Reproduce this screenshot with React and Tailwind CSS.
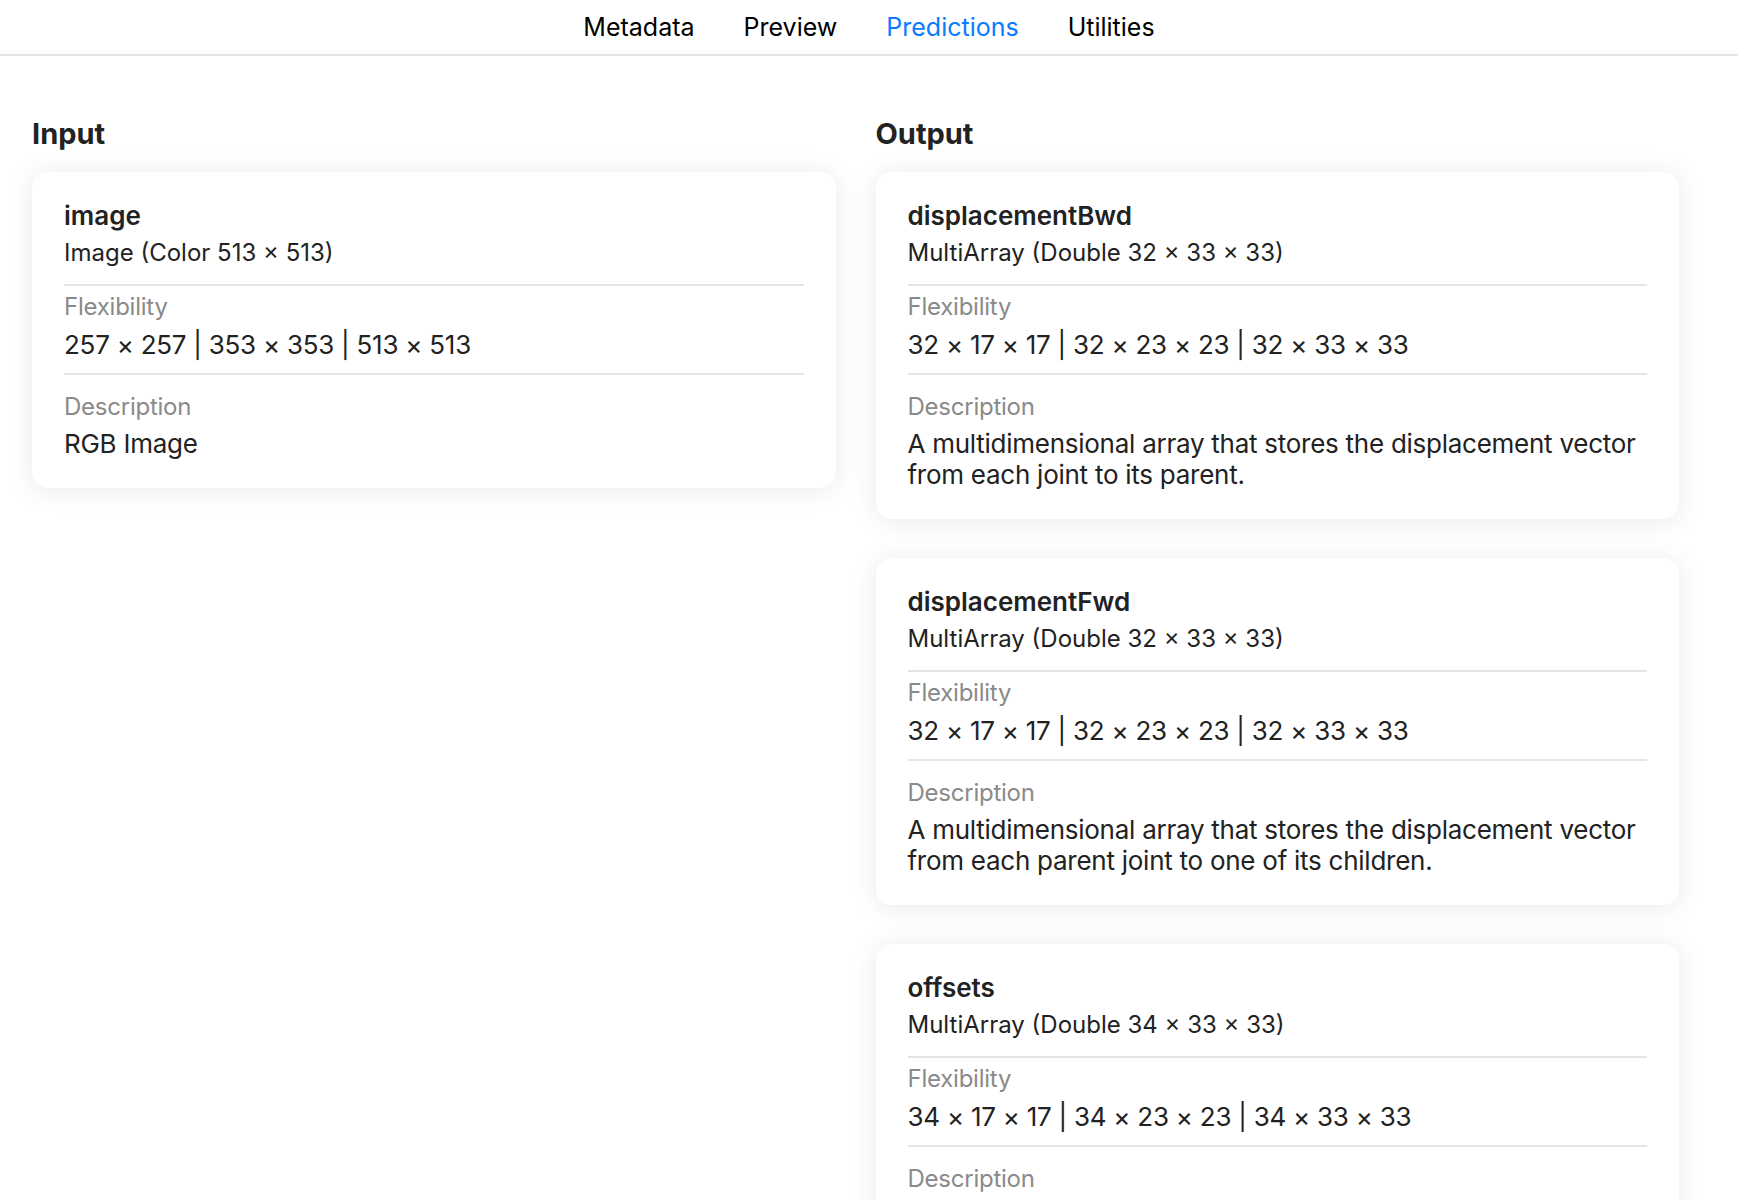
import React from "react";

const tabs = ["Metadata", "Preview", "Predictions", "Utilities"];

const inputs = [
  {
    name: "image",
    type: "Image (Color 513 × 513)",
    flex: "257 × 257 | 353 × 353 | 513 × 513",
    desc: "RGB Image",
  },
];

const outputs = [
  {
    name: "displacementBwd",
    type: "MultiArray (Double 32 × 33 × 33)",
    flex: "32 × 17 × 17 | 32 × 23 × 23 | 32 × 33 × 33",
    desc: "A multidimensional array that stores the displacement vector from each joint to its parent.",
  },
  {
    name: "displacementFwd",
    type: "MultiArray (Double 32 × 33 × 33)",
    flex: "32 × 17 × 17 | 32 × 23 × 23 | 32 × 33 × 33",
    desc: "A multidimensional array that stores the displacement vector from each parent joint to one of its children.",
  },
  {
    name: "offsets",
    type: "MultiArray (Double 34 × 33 × 33)",
    flex: "34 × 17 × 17 | 34 × 23 × 23 | 34 × 33 × 33",
    desc: "A multidimensional array that stores the offset vector from each keypoint to its true position.",
  },
];

function FeatureCard({ item }) {
  return (
    <div className="rounded-[16px] bg-white px-[32px] pt-[28px] pb-[29px] shadow-[0_2px_28px_rgba(0,0,0,0.09)]">
      <p className="text-[26px] font-semibold leading-[32px] text-[#222]">{item.name}</p>
      <p className="mt-[5px] text-[24px] leading-[32px] text-[#222]">{item.type}</p>
      <div className="mt-[15px] h-[2px] bg-[#e5e5e5]" />
      <p className="mt-[5px] text-[24px] leading-[32px] tracking-[-0.01em] text-[#8a8a8a]">Flexibility</p>
      <p className="mt-[6px] text-[26px] leading-[31px] tracking-[-0.01em] text-[#222]">{item.flex}</p>
      <div className="mt-[13px] h-[2px] bg-[#e5e5e5]" />
      <p className="mt-[16px] text-[24px] leading-[32px] tracking-[-0.01em] text-[#8a8a8a]">Description</p>
      <p className="mt-[5px] text-[26px] leading-[31px] tracking-[-0.01em] text-[#222]">{item.desc}</p>
    </div>
  );
}

export default function App() {
  return (
    <div className="min-h-screen bg-white font-['Inter',sans-serif]">
      <nav className="flex items-center justify-center gap-[49px] border-b-2 border-[#e5e5e5]">
        {tabs.map((t) => (
          <span
            key={t}
            className={
              t === "Predictions"
                ? "text-[25px] leading-[54px] text-[#0a7aff]"
                : "text-[25px] leading-[54px] text-black"
            }
          >
            {t}
          </span>
        ))}
      </nav>

      <div className="ml-[32px] mt-[61px] grid w-[1647px] grid-cols-2 items-start gap-x-[40px]">
        <section>
          <h2 className="text-[29px] font-bold leading-[34px] text-[#222]">Input</h2>
          <div className="mt-[21px] flex flex-col gap-[39px]">
            {inputs.map((it) => (
              <FeatureCard key={it.name} item={it} />
            ))}
          </div>
        </section>
        <section>
          <h2 className="text-[29px] font-bold leading-[34px] text-[#222]">Output</h2>
          <div className="mt-[21px] flex flex-col gap-[39px]">
            {outputs.map((it) => (
              <FeatureCard key={it.name} item={it} />
            ))}
          </div>
        </section>
      </div>
    </div>
  );
}
